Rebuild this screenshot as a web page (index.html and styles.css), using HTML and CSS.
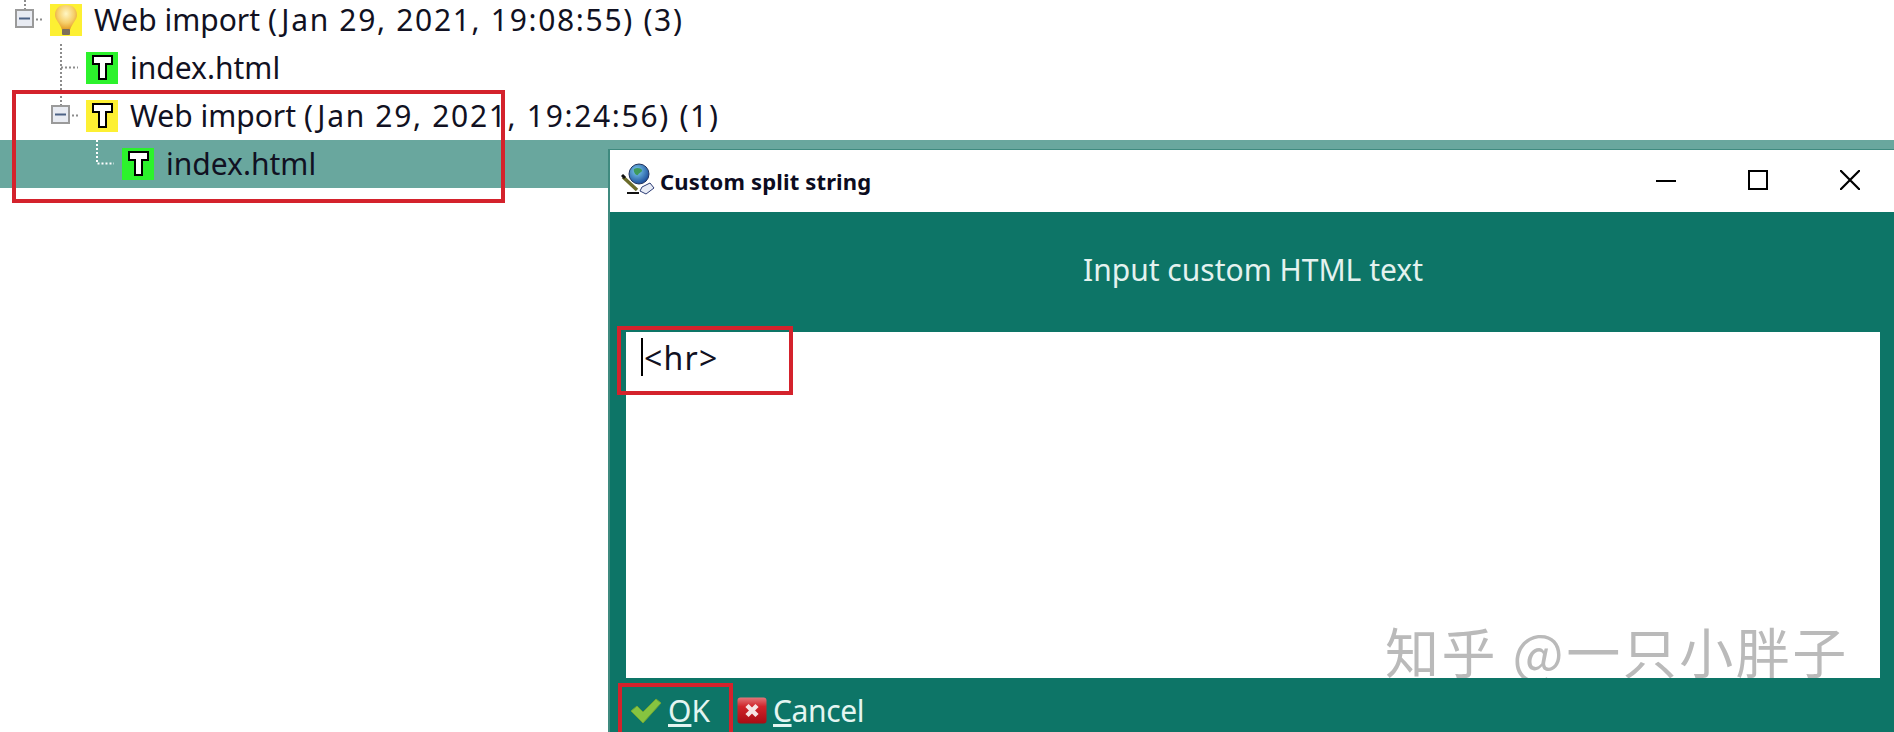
FILE: index.html
```html
<!DOCTYPE html>
<html lang="en">
<head>
<meta charset="utf-8">
<title>Custom split string</title>
<link rel="stylesheet" href="styles.css">
</head>
<body>
<svg class="defs" width="0" height="0" aria-hidden="true">
  <symbol id="t" viewBox="0 0 32 32">
    <path d="M7 4h19v8h-6v15h-7V12H7z" fill="#fff" stroke="#000" stroke-width="2"/>
  </symbol>
  <symbol id="minus" viewBox="0 0 20 20">
    <rect x="1" y="1" width="17" height="17" fill="#e8ebf2" stroke="#9a9a9a" stroke-width="2"/>
    <rect x="4" y="8.500" width="11" height="2" fill="#4c6285"/>
  </symbol>
</svg>
<main class="tree">
  <div class="row level-0">
    <svg class="glyph" width="36" height="48" viewBox="0 0 36 48">
      <path class="dots" d="M11 0v14M22 23.500h6"/>
      <use href="#minus" x="1" y="13" width="20" height="20"/>
    </svg>
    <svg class="icon yellow" width="32" height="32" viewBox="0 0 32 32">
      <defs>
        <radialGradient id="bulb" cx="50%" cy="35%" r="62%">
          <stop offset="0" stop-color="#fff6c4"/>
          <stop offset="0.600" stop-color="#f6cf6a"/>
          <stop offset="1" stop-color="#e59f2a"/>
        </radialGradient>
      </defs>
      <path d="M16 1c7 0 11 4 11 10 0 5-5 8-7 15h-8c-2-7-7-10-7-15C5 5 9 1 16 1z" fill="url(#bulb)"/>
      <rect x="12" y="25" width="8" height="6" rx="1" fill="#7d6f5a"/>
    </svg>
    <span class="label">Web import <span class="stamp">(Jan 29, 2021, 19:08:55) (3)</span></span>
  </div>
  <div class="row level-1">
    <svg class="glyph" width="36" height="48" viewBox="0 0 36 48">
      <path class="dots" d="M11 0v48M11 23.500h17"/>
    </svg>
    <svg class="icon green" width="32" height="32"><use href="#t"/></svg>
    <span class="label">index.html</span>
  </div>
  <div class="row level-1">
    <svg class="glyph" width="36" height="48" viewBox="0 0 36 48">
      <path class="dots" d="M11 0v14M22 23.500h6"/>
      <use href="#minus" x="1" y="13" width="20" height="20"/>
    </svg>
    <svg class="icon yellow" width="32" height="32"><use href="#t"/></svg>
    <span class="label">Web import <span class="stamp">(Jan 29, 2021, 19:24:56) (1)</span></span>
  </div>
  <div class="row level-2 selected">
    <svg class="glyph" width="36" height="48" viewBox="0 0 36 48">
      <path class="dots white" d="M11 0v23.500h17"/>
    </svg>
    <svg class="icon green" width="32" height="32"><use href="#t"/></svg>
    <span class="label">index.html</span>
  </div>
</main>

<section class="dialog">
  <header class="titlebar">
    <svg class="app-icon" width="34" height="32" viewBox="0 0 34 32">
      <defs>
        <radialGradient id="globe" cx="40%" cy="35%" r="65%">
          <stop offset="0" stop-color="#7fd0f0"/>
          <stop offset="1" stop-color="#1d4f9c"/>
        </radialGradient>
      </defs>
      <circle cx="18" cy="11" r="10" fill="url(#globe)" stroke="#23355f"/>
      <path d="M13 6c3-2 7-1 8 1 0 3-3 2-4 5-2 1-5-3-4-6z" fill="#3f9a5a"/>
      <path d="M2 14l14 13" stroke="#6b6b2a" stroke-width="3.500"/>
      <path d="M1 12l3 3" stroke="#111" stroke-width="3"/>
      <path d="M6 30h12" stroke="#111" stroke-width="2"/>
      <path d="M21 24l8-4 4 5-8 6-6-3z" fill="#e8ecf6" stroke="#2c3c74"/>
    </svg>
    <h1 class="title">Custom split string</h1>
    <div class="window-buttons">
      <svg width="20" height="20" viewBox="0 0 20 20"><path d="M0 11h20" stroke="#000" stroke-width="2"/></svg>
      <svg width="20" height="20" viewBox="0 0 20 20"><rect x="1" y="1" width="18" height="18" fill="none" stroke="#000" stroke-width="2"/></svg>
      <svg width="20" height="20" viewBox="0 0 20 20"><path d="M0 0l20 20M20 0L0 20" stroke="#000" stroke-width="2.200"/></svg>
    </div>
  </header>
  <div class="body">
    <p class="prompt">Input custom HTML text</p>
    <div class="input">
      <span class="caret"></span><span class="input-text">&lt;hr&gt;</span>
      <span class="watermark">知乎 @一只小胖子</span>
    </div>
    <footer class="buttons">
      <button class="btn" type="button">
        <svg width="32" height="26" viewBox="0 0 32 26">
          <path d="M1 13l6-5 6 6L26 1l5 4-18 20z" fill="#86c440" stroke="#6ea534"/>
        </svg>
        <span><u>O</u>K</span>
      </button>
      <button class="btn btn-cancel" type="button">
        <svg width="30" height="27" viewBox="0 0 30 27">
          <defs>
            <linearGradient id="red" x1="0" y1="0" x2="0" y2="1">
              <stop offset="0" stop-color="#e2777a"/>
              <stop offset="0.350" stop-color="#d0242a"/>
              <stop offset="1" stop-color="#a80c14"/>
            </linearGradient>
          </defs>
          <rect x="0.500" y="0.500" width="29" height="26" rx="3" fill="url(#red)"/>
          <path d="M10 8.500l10 10M20 8.500L10 18.500" stroke="#f6e4e4" stroke-width="4.500"/>
        </svg>
        <span><u>C</u>ancel</span>
      </button>
    </footer>
  </div>
</section>

<div class="mark mark-tree"></div>
<div class="mark mark-input"></div>
<div class="mark mark-ok"></div>
</body>
</html>
```

FILE: styles.css
```css
* { box-sizing: border-box; }

html, body {
  margin: 0;
  height: 732px;
  overflow: hidden;
  background: #fff;
}

body {
  position: relative;
  font-family: "Noto Sans", "Open Sans", sans-serif;
  color: #111122;
}

.defs { position: absolute; }

.tree {
  margin-top: -4px;
  display: flex;
  flex-direction: column;
}

.row {
  height: 48px;
  display: flex;
  align-items: center;
}

.level-0 { padding-left: 14px; }
.level-1 { padding-left: 50px; }
.level-2 { padding-left: 86px; }

.selected { background: #69a79e; }

.glyph { flex: none; }

.dots {
  fill: none;
  stroke: #8c8c8c;
  stroke-width: 2;
  stroke-dasharray: 2 2;
}

.dots.white { stroke: #fff; }

.icon { flex: none; }
.yellow { background: #fdf033; }
.green { background: #2cf22c; }

.label {
  margin-left: 12px;
  font-size: 30px;
  line-height: 44px;
  padding-bottom: 1px;
  white-space: nowrap;
}

.stamp { letter-spacing: 1.68px; }

.dialog {
  position: absolute;
  left: 608px;
  top: 149px;
  right: 0;
  bottom: 0;
  display: flex;
  flex-direction: column;
  border-left: 2px solid #3f8a7f;
  border-top: 1px solid #3f8a7f;
  background: #0d7567;
}

.titlebar {
  height: 62px;
  flex: none;
  display: flex;
  align-items: center;
  padding-left: 11px;
  background: #fff;
}

.app-icon {
  flex: none;
  margin-bottom: 4px;
}

.title {
  margin: 0 0 0 5px;
  font-size: 22px;
  font-weight: 700;
  letter-spacing: 0.15px;
  flex: 1;
  color: #0c0c20;
}

.window-buttons {
  display: flex;
  gap: 72px;
  padding-right: 34px;
  margin-top: -2px;
}

.body {
  flex: 1;
  display: flex;
  flex-direction: column;
  padding: 0 14px 0 16px;
  min-height: 0;
}

.prompt {
  margin: 0;
  height: 120px;
  flex: none;
  display: flex;
  align-items: center;
  justify-content: center;
  font-size: 30px;
  color: #e4f2ef;
  padding-bottom: 5px;
}

.input {
  position: relative;
  height: 346px;
  flex: none;
  overflow: hidden;
  background: #fff;
  padding: 4px 0 0 15px;
  display: flex;
  align-items: flex-start;
  font-size: 32px;
}

.caret {
  width: 2px;
  height: 38px;
  margin-top: 2px;
  background: #000;
}

.input-text {
  margin-left: 1px;
  letter-spacing: 1.200px;
  color: #111122;
}

.watermark {
  position: absolute;
  left: 759px;
  top: 287px;
  font-family: "Noto Sans CJK SC", sans-serif;
  font-size: 54px;
  letter-spacing: 2.500px;
  line-height: 1.2;
  color: #bababa;
  white-space: nowrap;
}

.buttons {
  display: flex;
  gap: 27px;
  padding-top: 12px;
  padding-left: 4px;
}

.btn {
  display: flex;
  align-items: center;
  gap: 6px;
  padding: 0;
  border: 0;
  background: none;
  font: inherit;
  font-size: 30px;
  color: #e4f5f1;
}

.btn-cancel { letter-spacing: -0.4px; }

.mark {
  position: absolute;
  border: 4px solid #d4222c;
}

.mark-tree { left: 12px; top: 90px; width: 493px; height: 113px; }
.mark-input { left: 617px; top: 326px; width: 176px; height: 69px; }
.mark-ok { left: 618px; top: 683px; width: 115px; height: 60px; }
```
